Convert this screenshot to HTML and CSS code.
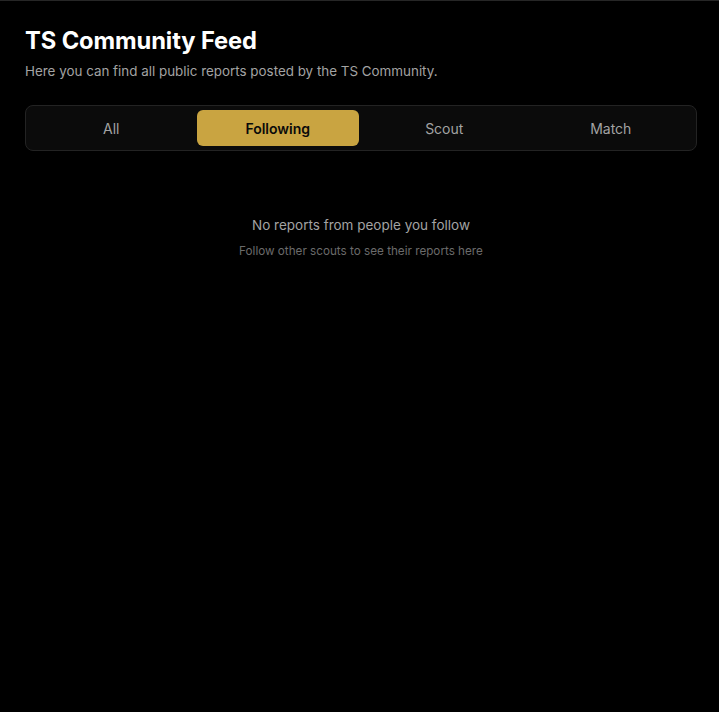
FILE: index.html
```html
<!DOCTYPE html>
<html lang="en">

<head>
    <meta charset="UTF-8">
    <meta name="viewport" content="width=device-width, initial-scale=1.0">
    <title>TS Community Feed</title>
    <link rel="stylesheet" href="styles.css">
</head>

<body>
    <div class="feed-page">
        <div class="feed-header">
            <h1 class="feed-title">TS Community Feed</h1>
            <p class="feed-subtitle">Here you can find all public reports posted by the TS Community.</p>
        </div>
        <div class="feed-tabs">
            <button type="button" class="tab">All</button>
            <button type="button" class="tab active">Following</button>
            <button type="button" class="tab">Scout</button>
            <button type="button" class="tab">Match</button>
        </div>
        <div class="empty-state">
            <p class="empty-title">No reports from people you follow</p>
            <p class="empty-hint">Follow other scouts to see their reports here</p>
        </div>
    </div>
</body>

</html>
```

FILE: styles.css
```css
html,
body {
    margin: 0;
    height: 100%;
    background-color: #000;
}

body {
    font-family: Inter, "Noto Sans", sans-serif;
    color: #fff;
}

.feed-page {
    min-height: 100%;
    box-sizing: border-box;
    border-top: 1px solid #262626;
    padding: 24px 22px 40px 25px;
}

.feed-title {
    margin: 0;
    font-size: 23.7px;
    line-height: 32px;
    font-weight: 700;
    letter-spacing: -0.1px;
}

.feed-subtitle {
    margin: 4px 0 0;
    font-size: 13.4px;
    line-height: 20px;
    color: #a3a3a3;
}

.feed-tabs {
    display: grid;
    grid-template-columns: repeat(4, 1fr);
    gap: 4px;
    margin-top: 24px;
    padding: 4px;
    background-color: #0b0b0b;
    border: 1px solid #232323;
    border-radius: 8px;
}

.tab {
    height: 36px;
    border: 0;
    border-radius: 6px;
    background: none;
    font-family: inherit;
    font-size: 14px;
    color: #a3a3a3;
    cursor: pointer;
}

.tab.active {
    background-color: #c9a441;
    color: #0a0a0a;
    font-weight: 600;
}

.empty-state {
    margin-top: 64px;
    text-align: center;
}

.empty-title {
    margin: 0;
    font-size: 13.5px;
    line-height: 20px;
    color: #a3a3a3;
}

.empty-hint {
    margin: 7px 0 0;
    font-size: 11.7px;
    line-height: 18px;
    color: #6b6b6b;
}
```
